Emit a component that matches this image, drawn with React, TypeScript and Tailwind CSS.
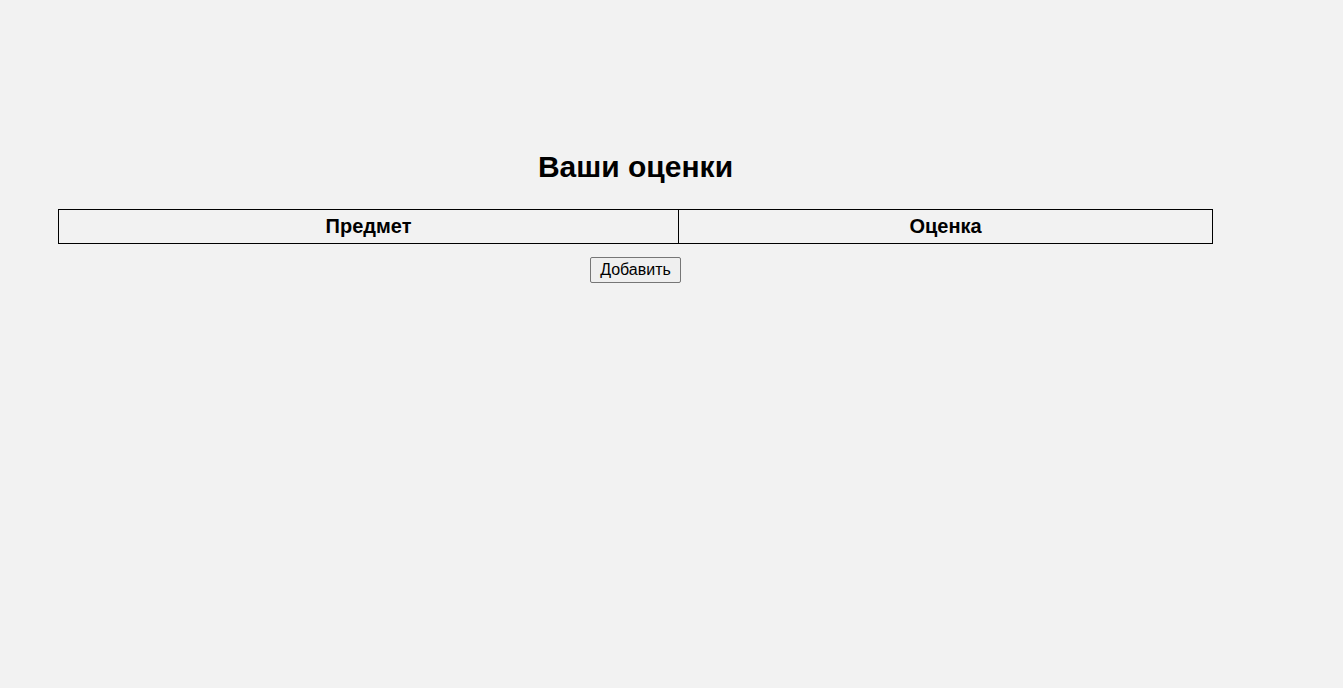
export default function App() {
  return (
    <div className="min-h-[688px] w-full bg-[#f2f2f2] font-['Liberation_Sans',Arial,sans-serif] text-black">
      <div className="ml-[58px] flex w-[1155px] flex-col items-center pt-[149px]">
        <h1 className="text-[30px] font-bold leading-[36px]">Ваши оценки</h1>
        <table className="mt-[24px] w-[1155px] border-collapse">
          <thead>
            <tr>
              <th className="w-[620px] border border-black px-1 py-[5px] text-[20px] font-bold leading-[23px]">
                Предмет
              </th>
              <th className="border border-black px-1 py-[5px] text-[20px] font-bold leading-[23px]">
                Оценка
              </th>
            </tr>
          </thead>
          <tbody></tbody>
        </table>
        <button
          type="button"
          className="mt-[13px] rounded-[2px] border border-[#767676] bg-[#efefef] px-[9px] py-[3px] text-[16px] leading-[18px] hover:bg-[#e5e5e5]"
        >
          Добавить
        </button>
      </div>
    </div>
  );
}
